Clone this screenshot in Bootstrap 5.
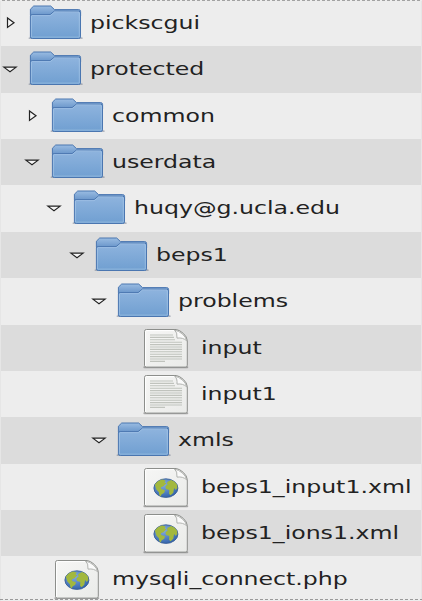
<!DOCTYPE html>
<html lang="en">
<head>
<meta charset="utf-8">
<meta name="viewport" content="width=device-width, initial-scale=1">
<title>File tree</title>
<link href="https://cdn.jsdelivr.net/npm/bootstrap@5.3.0/dist/css/bootstrap.min.css" rel="stylesheet">
<style>
body{background:#ededed;overflow:hidden;font-family:"DejaVu Sans",sans-serif;color:#222}
.tree{width:422px;height:601px;border-left:1px solid #e6e6e6;border-right:1px solid #e6e6e6}
.tree::before,.tree::after{content:"";position:absolute;left:0;width:422px;z-index:2}
.tree::before{top:0;height:1px;background:repeating-linear-gradient(90deg,#ededed 0 2px,#a2a2a2 2px 5px)}
.tree::after{top:599px;height:1px;background:repeating-linear-gradient(90deg,#9a9a9a 0 3px,#ededed 3px 5px)}
.node{height:46.36px;flex:none;padding-left:calc(var(--lv)*22.2px)}
.node:nth-child(even){background:#dcdcdc}
.l0{--lv:0}.l1{--lv:1}.l2{--lv:2}.l3{--lv:3}.l4{--lv:4}.l5{--lv:5}
.arrow{width:18px;height:46px;flex:none}
.pic{width:60px;height:46px;flex:none;margin-left:7.5px}
.label{font-size:18.4px;line-height:45.4px;white-space:nowrap;transform:scaleX(1.284);transform-origin:0 50%;margin-left:3px}
</style>
</head>
<body>
<svg width="0" height="0" class="position-absolute" aria-hidden="true">
<defs>
<linearGradient id="fb" x1="0" y1="0" x2="0" y2="1"><stop offset="0" stop-color="#8fb4de"/><stop offset="1" stop-color="#709fd1"/></linearGradient>
<linearGradient id="ft" x1="0" y1="0" x2="0" y2="1"><stop offset="0" stop-color="#9abce2"/><stop offset="1" stop-color="#6592c8"/></linearGradient>
<linearGradient id="pg" x1="0" y1="0" x2="1" y2="1"><stop offset="0" stop-color="#f6f6f5"/><stop offset="1" stop-color="#eaebe9"/></linearGradient>
<radialGradient id="sea" cx=".4" cy=".3" r=".7"><stop offset="0" stop-color="#86aee0"/><stop offset="1" stop-color="#3465ad"/></radialGradient>
<symbol id="right" viewBox="0 0 18 46"><path d="M6.5 18v9.4l6.5-4.7z" fill="#f6f6f6" stroke="#222" stroke-width="1.2"/></symbol>
<symbol id="down" viewBox="0 0 18 46"><path d="M2.8 21.1h12.4L9 25.7z" fill="#f6f6f6" stroke="#222" stroke-width="1.1"/></symbol>
<symbol id="folder" viewBox="0 0 60 46">
<path d="M2.5 38.2h52.3" stroke="#56617a" stroke-opacity=".4" stroke-width="1.8" stroke-linecap="round"/>
<path d="M3.4 15.4V9.2l3.3-3.2h17l3.8 3.6h24.1q2 0 2 2V16z" fill="url(#ft)" stroke="#4a76b0"/>
<path d="M3.4 36.9V16q0-1.4 1.7-1.4h18l4.4-3.6 24 .2q2 0 2 1.8v23.9q0 1.6-2 1.6H5.4q-2 0-2-1.6z" fill="url(#fb)" stroke="#4a76b0"/>
<path d="M4.5 37.1V16.3q0-.7 1-.7h17.8l4.4-3.8h23.4q1.2 0 1.2 1.2v24.1z" fill="none" stroke="#b4d0ee" stroke-opacity=".6" stroke-width=".8"/>
</symbol>
<symbol id="page" viewBox="0 0 60 46">
<path d="M5.3 42.3h43" stroke="#555" stroke-opacity=".45" stroke-width="1.9" stroke-linecap="round"/>
<path d="M5.5 6.3q0-1.8 2-1.8h29.7q3.4.5 7.1 3.9t4 7.2v24.6q0 1.9-2 1.9H7.5q-2 0-2-1.9z" fill="url(#pg)" stroke="#8c8e8b"/>
<path d="M6.6 40.9V6.6q0-1 1-1h28" fill="none" stroke="#fff" stroke-width="1"/>
<path d="M35.5 5.1q3 2 2.5 8 6-.8 9.8 2.8-1-4-4.5-7t-7.8-3.8z" fill="#fafafa" stroke="#a9aba8" stroke-width=".9"/>
</symbol>
<symbol id="text" viewBox="0 0 60 46"><use href="#page" x="1"/>
<path d="M12 10h23M12 12.4h24M12 14.8h25M12 17.2h32M12 19.6h32M12 22h32M12 24.4h32M12 26.8h32M12 29.2h32M12 31.6h32M12 34h32M12 36.4h15" stroke="#c0c3bd" stroke-width="1.1"/></symbol>
<symbol id="web" viewBox="0 0 60 46"><use href="#page" x="1"/>
<g transform="translate(.9 .3)"><ellipse cx="27" cy="23.8" rx="12" ry="9.3" fill="url(#sea)" stroke="#3a5f94" stroke-width=".9"/>
<path d="M16 20.5q2.5-4.2 7.3-5.2l3.4.9-1 2.2 1.8.6-3 2.9-2.5 1 .3 1.8 3.8 1.2-.8 2.5-2.7 1.8-.8 2q-2-1.4-1.8-4.2l-2.5-2.9z" fill="#a2b83e"/>
<path d="M29.2 17.2l3-1.5q4.2 1.2 6 4.8l.2 3.2-1.5 2-1.7-1.9-.8 4.7-2.6 2.5-1.6-1.2.2-4.2-3.2-.8-.7-2.7 2.4-2.2-1-1.2z" fill="#a2b83e"/></g>
</symbol>
</defs>
</svg>
<main class="tree d-flex flex-column">
<div class="node l0 d-flex"><svg class="arrow"><use href="#right"/></svg><svg class="pic"><use href="#folder"/></svg><span class="label">pickscgui</span></div>
<div class="node l0 d-flex"><svg class="arrow"><use href="#down"/></svg><svg class="pic"><use href="#folder"/></svg><span class="label">protected</span></div>
<div class="node l1 d-flex"><svg class="arrow"><use href="#right"/></svg><svg class="pic"><use href="#folder"/></svg><span class="label">common</span></div>
<div class="node l1 d-flex"><svg class="arrow"><use href="#down"/></svg><svg class="pic"><use href="#folder"/></svg><span class="label">userdata</span></div>
<div class="node l2 d-flex"><svg class="arrow"><use href="#down"/></svg><svg class="pic"><use href="#folder"/></svg><span class="label">huqy@g.ucla.edu</span></div>
<div class="node l3 d-flex"><svg class="arrow"><use href="#down"/></svg><svg class="pic"><use href="#folder"/></svg><span class="label">beps1</span></div>
<div class="node l4 d-flex"><svg class="arrow"><use href="#down"/></svg><svg class="pic"><use href="#folder"/></svg><span class="label">problems</span></div>
<div class="node l5 d-flex"><span class="arrow"></span><svg class="pic"><use href="#text"/></svg><span class="label">input</span></div>
<div class="node l5 d-flex"><span class="arrow"></span><svg class="pic"><use href="#text"/></svg><span class="label">input1</span></div>
<div class="node l4 d-flex"><svg class="arrow"><use href="#down"/></svg><svg class="pic"><use href="#folder"/></svg><span class="label">xmls</span></div>
<div class="node l5 d-flex"><span class="arrow"></span><svg class="pic"><use href="#web"/></svg><span class="label">beps1_input1.xml</span></div>
<div class="node l5 d-flex"><span class="arrow"></span><svg class="pic"><use href="#web"/></svg><span class="label">beps1_ions1.xml</span></div>
<div class="node l1 d-flex"><span class="arrow"></span><svg class="pic"><use href="#web"/></svg><span class="label">mysqli_connect.php</span></div>
</main>
<script src="https://cdn.jsdelivr.net/npm/bootstrap@5.3.0/dist/js/bootstrap.bundle.min.js"></script>
</body>
</html>
